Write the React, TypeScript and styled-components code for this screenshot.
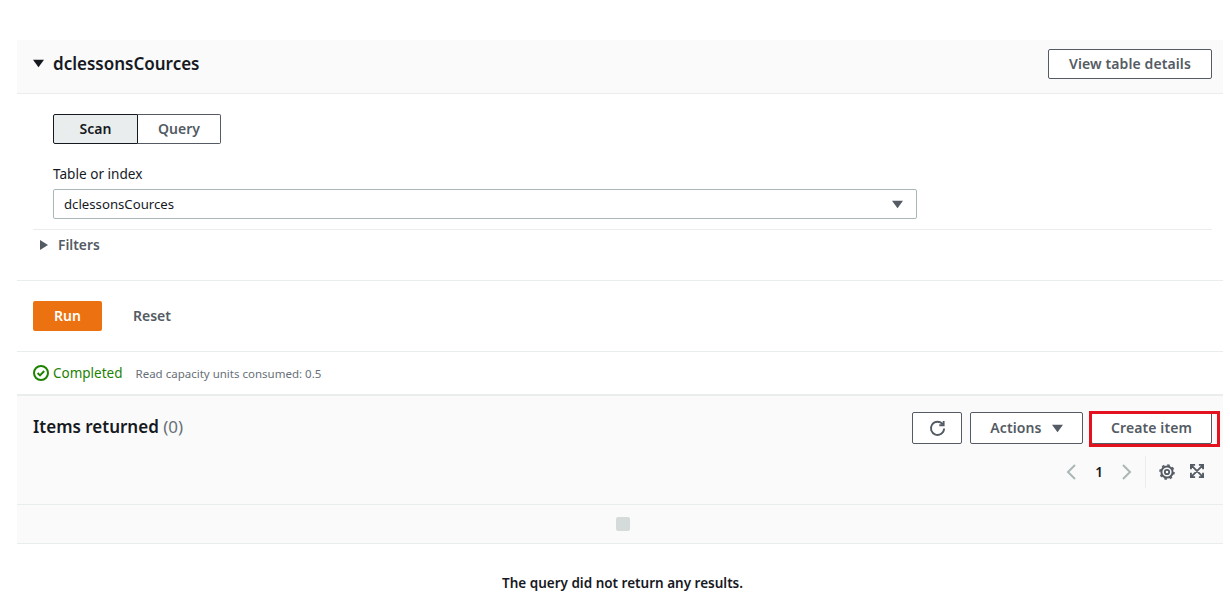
import { FC } from "react";
import styled, { createGlobalStyle } from "styled-components";

const GlobalStyle = createGlobalStyle`
    html, body {
        margin: 0;
        padding: 0;
        background: #fff;
        font-family: "Noto Sans", "Open Sans", sans-serif;
        font-size: 14px;
        color: #16191f;
    }
`;

const Page = styled.div`
    padding: 40px 7px 0 17px;
    height: 571px;
    overflow: hidden;
`;

const TableHeader = styled.div`
    height: 53px;
    box-sizing: content-box;
    display: flex;
    align-items: flex-start;
    justify-content: space-between;
    padding: 0 11px 0 16px;
    background: #fafafa;
    border-bottom: 1px solid #eaeded;
`;

const TableTitle = styled.div`
    display: flex;
    align-items: center;
    gap: 9px;
    height: 47px;
    font-size: 17px;
    font-weight: 600;
    h2 {
        margin: 0;
        font: inherit;
    }
`;

const HeaderAction = styled.div`
    padding-top: 9px;
`;

const Button = styled.button<{ $width: number; $height?: number }>`
    width: ${p => p.$width}px;
    height: ${p => p.$height ?? 30}px;
    box-sizing: border-box;
    display: flex;
    align-items: center;
    justify-content: center;
    gap: 10px;
    padding: 0 0 2px;
    background: #fff;
    border: 1px solid #545b64;
    border-radius: 2px;
    color: #545b64;
    font-family: inherit;
    font-size: 14px;
    font-weight: 600;
    letter-spacing: 0.1px;
    svg {
        position: relative;
        top: 1px;
    }
`;

const ScanForm = styled.div`
    padding: 20px 0 10px 36px;
`;

const Segments = styled.div`
    display: flex;
    height: 30px;
`;

const Segment = styled.button<{ $active?: boolean; $width: number }>`
    width: ${p => p.$width}px;
    padding: 0 0 2px;
    box-sizing: border-box;
    font-family: inherit;
    font-size: 14px;
    font-weight: 600;
    background: ${p => (p.$active ? "#eaeded" : "#fff")};
    color: ${p => (p.$active ? "#16191f" : "#545b64")};
    border: 1px solid ${p => (p.$active ? "#16191f" : "#545b64")};
    border-left-width: ${p => (p.$active ? 1 : 0)}px;
    border-radius: ${p => (p.$active ? "2px 0 0 2px" : "0 2px 2px 0")};
`;

const FieldLabel = styled.label`
    display: block;
    margin-top: 20px;
    height: 19px;
    line-height: 19px;
    font-size: 13.6px;
`;

const SelectBox = styled.div`
    margin-top: 6px;
    width: 864px;
    height: 30px;
    box-sizing: border-box;
    display: flex;
    align-items: center;
    justify-content: space-between;
    padding: 0 13px 0 10px;
    border: 1px solid #aab7b8;
    border-radius: 2px;
    font-size: 13.2px;
`;

const FiltersRow = styled.div`
    margin: 0 11px 0 16px;
    height: 51px;
    box-sizing: border-box;
    border-top: 1px solid #eaeded;
    padding: 5px 0 0 5px;
    display: flex;
    align-items: flex-start;
    gap: 8px;
    color: #545b64;
    font-weight: 600;
    font-size: 13.8px;
    line-height: 19px;
    svg {
        margin-top: 4px;
    }
`;

const Actions = styled.div`
    border-top: 1px solid #eaeded;
    height: 71px;
    box-sizing: border-box;
    padding: 20px 16px 0;
    display: flex;
    align-items: flex-start;
    gap: 31px;
`;

const RunButton = styled.button`
    width: 69px;
    height: 30px;
    padding: 0 0 2px;
    border: 0;
    border-radius: 2px;
    background: #ec7211;
    color: #fff;
    font-family: inherit;
    font-size: 14px;
    font-weight: 600;
`;

const ResetButton = styled.button`
    height: 30px;
    padding: 0 0 2px;
    border: 0;
    background: none;
    color: #545b64;
    font-family: inherit;
    font-size: 14px;
    font-weight: 600;
`;

const StatusBar = styled.div`
    height: 43px;
    box-sizing: border-box;
    border-top: 1px solid #eaeded;
    padding: 0 16px;
    display: flex;
    align-items: center;
    gap: 13px;
`;

const StatusOk = styled.span`
    display: flex;
    align-items: center;
    gap: 4px;
    color: #1d8102;
    font-size: 13.5px;
`;

const StatusNote = styled.span`
    color: #687078;
    font-size: 11.5px;
`;

const ResultsPanel = styled.div`
    background: #fafafa;
    border-top: 2px solid #eaeded;
    height: 110px;
    box-sizing: border-box;
    padding: 16px 3px 0 16px;
    display: flex;
    justify-content: space-between;
`;

const ResultsTitle = styled.h2`
    margin: 0;
    font-size: 17px;
    line-height: 30px;
    font-weight: 600;
    span {
        font-weight: 400;
        color: #687078;
    }
`;

const ResultsTools = styled.div`
    display: flex;
    flex-direction: column;
    align-items: flex-end;
`;

const ButtonRow = styled.div`
    display: flex;
    gap: 8px;
    margin-right: 8px;
`;

const CreateWrap = styled.div`
    position: relative;
`;

const Annotation = styled.div`
    position: absolute;
    left: -2px;
    right: -8px;
    top: -1px;
    bottom: -3px;
    border: 3px solid #e4111f;
    pointer-events: none;
`;

const PagerRow = styled.div`
    margin-top: 12px;
    margin-right: 16px;
    height: 32px;
    display: flex;
    align-items: center;
    color: #16191f;
    font-size: 13.5px;
    font-weight: 600;
`;

const PageNumber = styled.span`
    margin: 0 18px;
`;

const PagerDivider = styled.div`
    width: 1px;
    height: 32px;
    background: #eaeded;
    margin: 0 13px 0 12px;
`;

const ToolIcon = styled.svg<{ $gap?: number; $lift?: number }>`
    display: block;
    margin-left: ${p => p.$gap ?? 0}px;
    margin-bottom: ${p => p.$lift ?? 0}px;
`;

const TableBand = styled.div`
    height: 40px;
    box-sizing: border-box;
    background: #fafafa;
    border-top: 1px solid #eaeded;
    border-bottom: 1px solid #eaeded;
    padding-left: 6px;
    display: flex;
    align-items: center;
    justify-content: center;
`;

const Checkbox = styled.div`
    width: 14px;
    height: 14px;
    border-radius: 2px;
    background: #d5dbdb;
`;

const EmptyMessage = styled.p`
    margin: 30px 0 0;
    padding-left: 5px;
    text-align: center;
    font-size: 13.5px;
    line-height: 19px;
    font-weight: 600;
`;

const Caret: FC<{ size: number; color: string; dir?: "down" | "right" }> = ({ size, color, dir = "down" }) => (
    <svg width={size} height={size} viewBox="0 0 12 12">
        <path d={dir === "down" ? "M0 2h12L6 10z" : "M2 1v10l8-5z"} fill={color} />
    </svg>
);

export default function App() {
    return (
        <Page>
            <GlobalStyle />
            <TableHeader>
                <TableTitle>
                    <Caret size={11} color="#16191f" />
                    <h2>dclessonsCources</h2>
                </TableTitle>
                <HeaderAction>
                    <Button $width={164}>View table details</Button>
                </HeaderAction>
            </TableHeader>

            <ScanForm>
                <Segments>
                    <Segment $active $width={85}>Scan</Segment>
                    <Segment $width={83}>Query</Segment>
                </Segments>
                <FieldLabel>Table or index</FieldLabel>
                <SelectBox>
                    dclessonsCources
                    <Caret size={11} color="#545b64" />
                </SelectBox>
            </ScanForm>

            <FiltersRow>
                <Caret size={12} color="#545b64" dir="right" />
                Filters
            </FiltersRow>

            <Actions>
                <RunButton>Run</RunButton>
                <ResetButton>Reset</ResetButton>
            </Actions>

            <StatusBar>
                <StatusOk>
                    <svg width="16" height="16" viewBox="0 0 16 16" fill="none" stroke="#1d8102" strokeWidth="2">
                        <circle cx="8" cy="8" r="7" />
                        <path d="M4.6 8l2.4 2.4 4.2-4.4" />
                    </svg>
                    Completed
                </StatusOk>
                <StatusNote>Read capacity units consumed: 0.5</StatusNote>
            </StatusBar>

            <ResultsPanel>
                <ResultsTitle>Items returned <span>(0)</span></ResultsTitle>
                <ResultsTools>
                    <ButtonRow>
                        <Button $width={50} $height={32}>
                            <svg width="17" height="17" viewBox="0 0 18 18" fill="none" stroke="#545b64" strokeWidth="2">
                                <path d="M14.6 4.6A7 7 0 1 0 16 9" />
                                <path d="M15.5 1v4.600h-4.600" />
                            </svg>
                        </Button>
                        <Button $width={113} $height={32}>
                            Actions
                            <Caret size={11} color="#545b64" />
                        </Button>
                        <CreateWrap>
                            <Button $width={121} $height={32}>Create item</Button>
                            <Annotation />
                        </CreateWrap>
                    </ButtonRow>
                    <PagerRow>
                        <svg width="12" height="18" viewBox="0 0 12 18" fill="none" stroke="#aab7b8" strokeWidth="2">
                            <path d="M10 2L3 9l7 7" />
                        </svg>
                        <PageNumber>1</PageNumber>
                        <svg width="12" height="18" viewBox="0 0 12 18" fill="none" stroke="#aab7b8" strokeWidth="2">
                            <path d="M2 2l7 7-7 7" />
                        </svg>
                        <PagerDivider />
                        <ToolIcon width="16" height="16" viewBox="0 0 16 16" fill="none" stroke="#545b64">
                            <circle cx="8" cy="8" r="2.2" strokeWidth="1.8" />
                            <circle cx="8" cy="8" r="5.6" strokeWidth="2" />
                            <circle cx="8" cy="8" r="7" strokeWidth="1.6" strokeDasharray="2.6 2.9" />
                        </ToolIcon>
                        <ToolIcon $gap={15} $lift={3} width="14" height="14" viewBox="0 0 15 15" fill="none" stroke="#545b64" strokeWidth="2">
                            <path d="M1 5.500V1h4.500M9.500 1H14v4.500M14 9.500V14H9.500M5.500 14H1V9.500M1.500 1.500l12 12M13.500 1.500l-12 12" />
                        </ToolIcon>
                    </PagerRow>
                </ResultsTools>
            </ResultsPanel>

            <TableBand>
                <Checkbox />
            </TableBand>

            <EmptyMessage>The query did not return any results.</EmptyMessage>
        </Page>
    );
}
